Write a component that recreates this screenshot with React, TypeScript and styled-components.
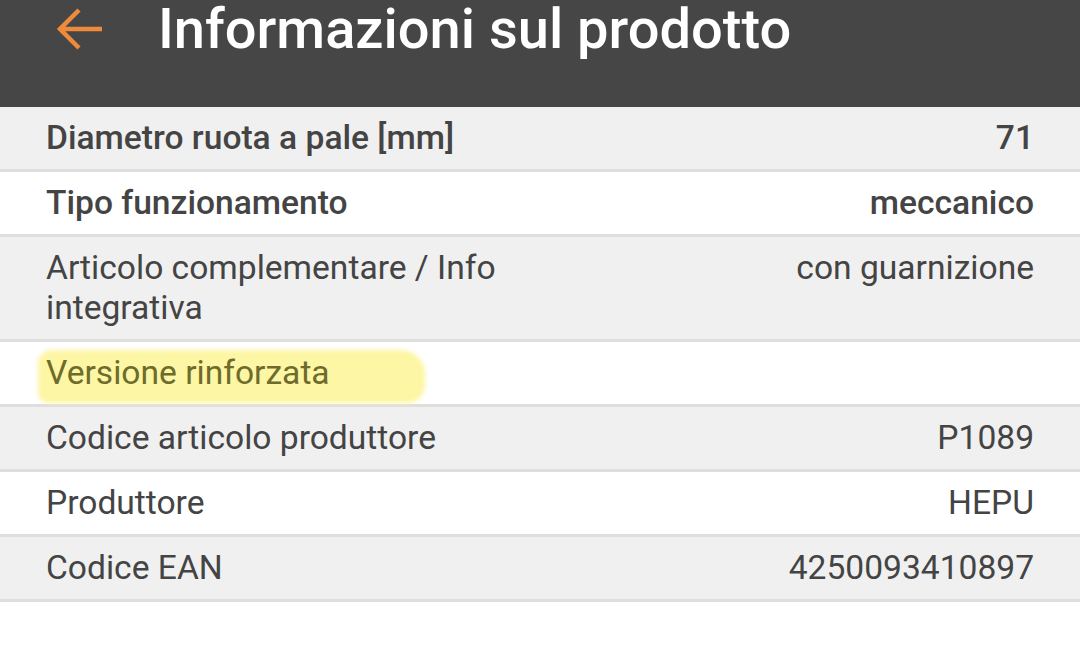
import React from "react";
import styled, { createGlobalStyle } from "styled-components";

const Global = createGlobalStyle`
  html, body { margin: 0; padding: 0; background: #ffffff; }
  body { font-family: Roboto, "Noto Sans", "Liberation Sans", sans-serif; }
`;

const Page = styled.div`
  width: 1080px;
  min-height: 646px;
  background: #ffffff;
`;

const Header = styled.header`
  height: 107px;
  background: #464646;
  display: flex;
  align-items: flex-start;
  padding-left: 55px;
  box-sizing: border-box;
`;

const BackButton = styled.div`
  width: 50px;
  height: 58px;
  display: flex;
  align-items: center;
  justify-content: center;
  margin-right: 53px;
`;

const Title = styled.h1`
  margin: 0;
  color: #ffffff;
  font-family: Roboto, sans-serif;
  font-weight: 500;
  font-size: 56px;
  line-height: 58px;
`;

const Table = styled.div`
  display: flex;
  flex-direction: column;
`;

const Row = styled.div<{ $alt: boolean }>`
  display: flex;
  justify-content: space-between;
  align-items: flex-start;
  padding: 11px 46px;
  background: ${(p) => (p.$alt ? "#f0f0f0" : "#ffffff")};
  border-bottom: 3px solid #dedede;
  font-size: 33.6px;
  line-height: 40px;
  color: #444444;
`;

const Label = styled.div<{ $bold?: boolean }>`
  flex: 0 0 auto;
  max-width: 500px;
  font-weight: ${(p) => (p.$bold ? 500 : 400)};
`;

const Value = styled.div<{ $bold?: boolean }>`
  text-align: right;
  font-weight: ${(p) => (p.$bold ? 500 : 400)};
`;

const Highlight = styled.span`
  position: relative;
  display: inline-block;
  color: #6e6c2c;
  &::before {
    content: "";
    position: absolute;
    left: -8px;
    right: -95px;
    top: -3px;
    bottom: -10px;
    background: #fdf6a4;
    border-radius: 14px 24px 18px 10px;
    filter: blur(2px);
    z-index: 0;
  }
  & > span {
    position: relative;
    z-index: 1;
  }
`;

const rows: { label: string; value: string; bold?: boolean; highlight?: boolean }[] = [
  { label: "Diametro ruota a pale [mm]", value: "71", bold: true },
  { label: "Tipo funzionamento", value: "meccanico", bold: true },
  { label: "Articolo complementare / Info integrativa", value: "con guarnizione" },
  { label: "Versione rinforzata", value: "", highlight: true },
  { label: "Codice articolo produttore", value: "P1089" },
  { label: "Produttore", value: "HEPU" },
  { label: "Codice EAN", value: "4250093410897" },
];

export default function App() {
  return (
    <Page>
      <Global />
      <Header>
        <BackButton>
          <svg width="48" height="46" viewBox="0 0 48 46" fill="none">
            <path
              d="M46 23H6M23 4L4 23l19 19"
              stroke="#ee8a3c"
              strokeWidth="4.5"
              strokeLinecap="butt"
              strokeLinejoin="miter"
            />
          </svg>
        </BackButton>
        <Title>Informazioni sul prodotto</Title>
      </Header>
      <Table>
        {rows.map((r, i) => (
          <Row key={r.label} $alt={i % 2 === 0}>
            <Label $bold={r.bold}>
              {r.highlight ? (
                <Highlight>
                  <span>{r.label}</span>
                </Highlight>
              ) : (
                r.label
              )}
            </Label>
            <Value $bold={r.bold}>{r.value}</Value>
          </Row>
        ))}
      </Table>
    </Page>
  );
}
